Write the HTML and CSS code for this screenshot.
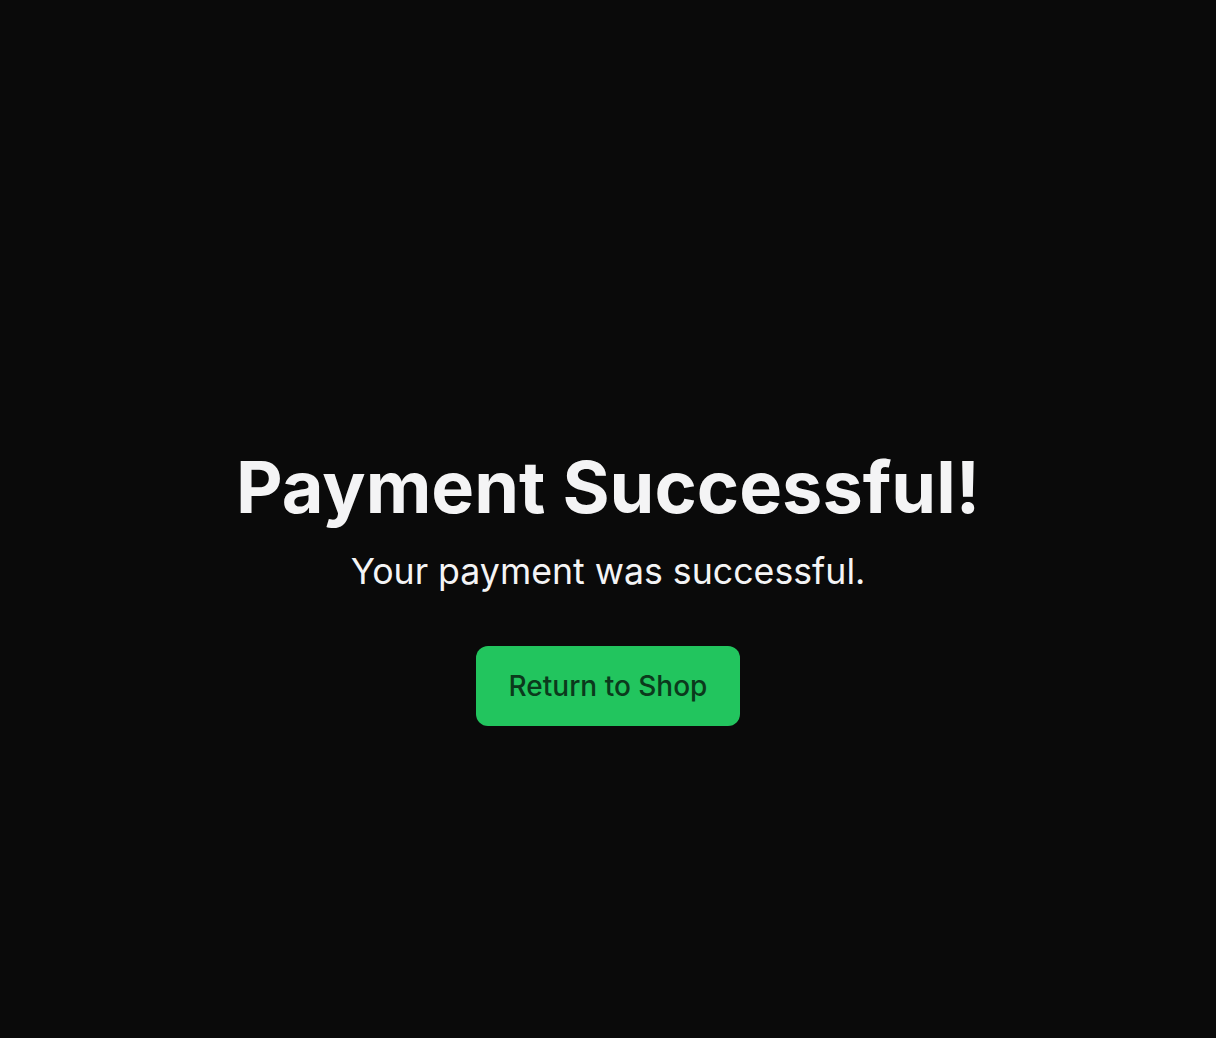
FILE: index.html
```html
<!DOCTYPE html>
<html lang="en">
<head>
<meta charset="utf-8">
<title>Payment Successful</title>
<link rel="stylesheet" href="styles.css">
</head>
<body>
<main class="page">
  <section class="content">
    <h1 class="title">Payment Successful!</h1>
    <p class="subtitle">Your payment was successful.</p>
    <a class="button" href="#">Return to Shop</a>
  </section>
</main>
</body>
</html>
```

FILE: styles.css
```css
html, body {
  margin: 0;
  padding: 0;
  background: #0a0a0a;
}
body {
  font-family: Inter, "Noto Sans", sans-serif;
  color: #f4f4f5;
}
.page {
  min-height: 1038px;
  display: flex;
  align-items: center;
  justify-content: center;
  box-sizing: border-box;
  padding-top: 132px;
}
.content {
  display: flex;
  flex-direction: column;
  align-items: center;
  text-align: center;
}
.title {
  margin: 0;
  padding-top: 3px;
  font-size: 72px;
  line-height: 1.1;
  font-weight: 700;
}
.subtitle {
  margin: 24px 0 0;
  font-size: 35.7px;
  font-weight: 400;
  line-height: 1.2;
}
.button {
  margin-top: 53px;
  display: inline-block;
  padding: 24px 33px;
  background: #22c55e;
  color: #0b3a1c;
  font-size: 28px;
  line-height: 32px;
  font-weight: 500;
  text-decoration: none;
  border-radius: 12px;
}
```
